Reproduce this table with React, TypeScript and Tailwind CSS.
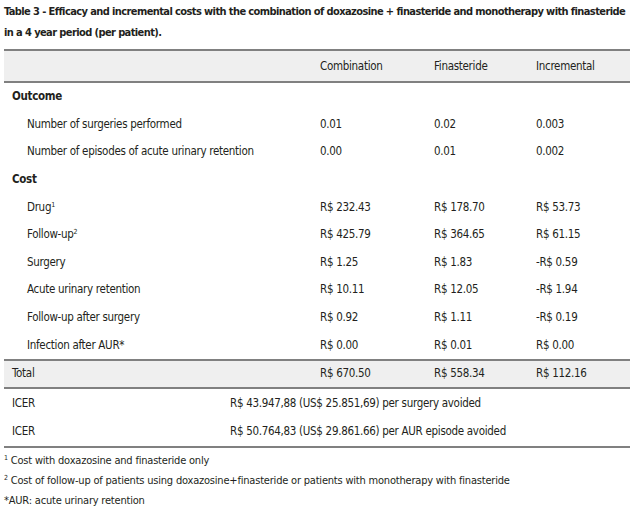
const rows: { label: string; sup?: string; a: string; b: string; c: string; head?: boolean }[] = [
  { label: "Outcome", a: "", b: "", c: "", head: true },
  { label: "Number of surgeries performed", a: "0.01", b: "0.02", c: "0.003" },
  { label: "Number of episodes of acute urinary retention", a: "0.00", b: "0.01", c: "0.002" },
  { label: "Cost", a: "", b: "", c: "", head: true },
  { label: "Drug", sup: "1", a: "R$ 232.43", b: "R$ 178.70", c: "R$ 53.73" },
  { label: "Follow-up", sup: "2", a: "R$ 425.79", b: "R$ 364.65", c: "R$ 61.15" },
  { label: "Surgery", a: "R$ 1.25", b: "R$ 1.83", c: "-R$ 0.59" },
  { label: "Acute urinary retention", a: "R$ 10.11", b: "R$ 12.05", c: "-R$ 1.94" },
  { label: "Follow-up after surgery", a: "R$ 0.92", b: "R$ 1.11", c: "-R$ 0.19" },
  { label: "Infection after AUR*", a: "R$ 0.00", b: "R$ 0.01", c: "R$ 0.00" },
]

const font = { fontFamily: '"DejaVu Sans Condensed", "Liberation Sans", sans-serif' }

export default function App() {
  return (
    <div className="w-[630px] h-[512px] bg-white text-[#231f20] overflow-hidden" style={font}>
      <div className="pl-[4px] pt-[1px] text-[11px] font-bold leading-[21px] tracking-[-0.6px] whitespace-nowrap">
        <div>Table 3 - Efficacy and incremental costs with the combination of doxazosine + finasteride and monotherapy with finasteride</div>
        <div>in a 4 year period (per patient).</div>
      </div>

      <div className="ml-[4px] mt-[6px] text-[11.5px] tracking-[-0.3px]">
        <div className="grid grid-cols-[304px_114px_102px_106px] h-[34px] pt-[2px] items-center bg-[#efefef] border-y-2 border-[#808080]">
          <div />
          <div className="pl-[12px]">Combination</div>
          <div className="pl-[12px]">Finasteride</div>
          <div className="pl-[12px]">Incremental</div>
        </div>

        {rows.map((r) => (
          <div key={r.label} className="grid grid-cols-[304px_114px_102px_106px] h-[27.6px] items-center">
            <div className={r.head ? "pl-[8px] font-bold" : "pl-[23px]"}>
              {r.label}
              {r.sup && <span className="text-[7px] leading-none align-[4px]">{r.sup}</span>}
            </div>
            <div className="pl-[12px]">{r.a}</div>
            <div className="pl-[12px]">{r.b}</div>
            <div className="pl-[12px]">{r.c}</div>
          </div>
        ))}

        <div className="grid grid-cols-[304px_114px_102px_106px] h-[30px] items-center bg-[#efefef] border-y-2 border-[#808080]">
          <div className="pl-[8px]">Total</div>
          <div className="pl-[12px]">R$ 670.50</div>
          <div className="pl-[12px]">R$ 558.34</div>
          <div className="pl-[12px]">R$ 112.16</div>
        </div>

        <div className="border-b-2 border-[#808080]">
          <div className="grid grid-cols-[226px_1fr] h-[28.5px] items-center">
            <div className="pl-[8px]">ICER</div>
            <div>R$ 43.947,88 (US$ 25.851,69) per surgery avoided</div>
          </div>
          <div className="grid grid-cols-[226px_1fr] h-[28.5px] items-center">
            <div className="pl-[8px]">ICER</div>
            <div>R$ 50.764,83 (US$ 29.861.66) per AUR episode avoided</div>
          </div>
        </div>

        <div className="mt-[3px] text-[11px] leading-[20px] tracking-[-0.2px]">
          <div>
            <span className="text-[7px] leading-none align-[4px]">1</span> Cost with doxazosine and finasteride only
          </div>
          <div>
            <span className="text-[7px] leading-none align-[4px]">2</span> Cost of follow-up of patients using doxazosine+finasteride or patients with monotherapy with finasteride
          </div>
          <div>*AUR: acute urinary retention</div>
        </div>
      </div>
    </div>
  )
}
